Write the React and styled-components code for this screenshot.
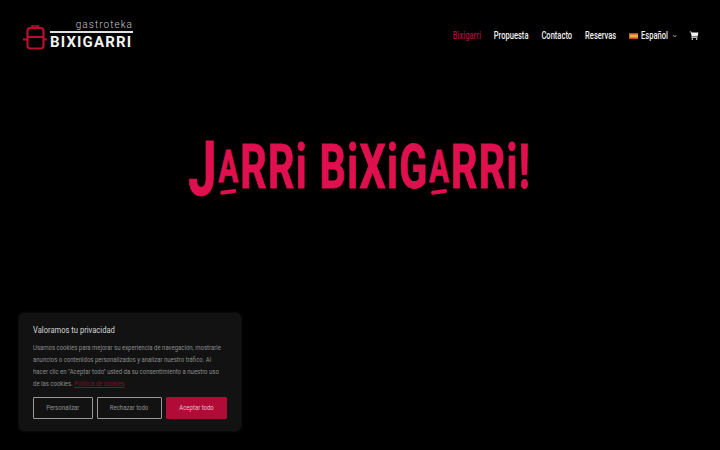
import React from "react";
import styled, { createGlobalStyle } from "styled-components";

const SANS = `"Roboto", "Liberation Sans", sans-serif`;
const Global = createGlobalStyle`
  html, body { margin: 0; padding: 0; background: #000; }
  body { width: 720px; height: 450px; overflow: hidden; font-family: ${SANS}; }
  * { box-sizing: border-box; }
`;
const Page = styled.div`
  position: relative; width: 720px; height: 450px; background: #000; overflow: hidden;
`;
const Header = styled.header`
  display: flex; align-items: center; justify-content: space-between;
  height: 70px; padding: 0 21px 0 23px;
`;
const Logo = styled.div`display: flex; align-items: flex-end; gap: 3px;`;
const LogoText = styled.div`display: flex; flex-direction: column; align-items: flex-end; width: 83px;`;
const Tagline = styled.span`
  font: 300 10px/10px ${SANS}; letter-spacing: 1.05px; color: #c8c8c8; margin-bottom: 1px;
`;
const Rule = styled.div`width: 83px; height: 2px; background: #e2e2e2;`;
const Brand = styled.span`
  font: 700 15px/16px ${SANS}; letter-spacing: 1.15px; color: #f2f2f2; margin-top: 1px; white-space: nowrap;
  width: 83px;
`;
const Nav = styled.nav`
  display: flex; align-items: center; gap: 18px; margin-top: 1px;
  transform: scaleX(.72); transform-origin: right center;
`;
const NavLink = styled.a`
  font: 500 10.500px/14px ${SANS}; color: ${p => (p.$active ? "#b00c37" : "#f1f1f1")};
  white-space: nowrap; display: flex; align-items: center; gap: 4px;
`;
const Chevron = styled.svg`width: 6.500px; height: 4px; margin-left: 2px;`;
const Cart = styled.svg`width: 12.500px; height: 9px;`;
const Flag = styled.svg`width: 12.500px; height: 6px;`;
const Hero = styled.main`display: flex; justify-content: center; padding-top: 57px;`;
const Title = styled.h1`
  margin: 0; font: 700 62px/80px ${SANS}; color: #e0104f;
  letter-spacing: 2px; white-space: nowrap;
  -webkit-text-stroke: 1px #e0104f;
  transform: scaleX(.665);
`;
const Jay = styled.span`
  font-size: 76px; line-height: 1; vertical-align: -7px;
`;
const UnderA = styled.span`
  position: relative; display: inline-block; font-size: 44px; margin: 0 1px; vertical-align: 6px; line-height: 1;
  &::after { content: ""; position: absolute; left: 3px; right: 5px; bottom: -5px; height: 4px; border-radius: 2px; background: #e0104f; transform: rotate(-5deg); }
`;
const Cookie = styled.section`
  position: absolute; left: 20px; top: 314px; width: 220px; height: 116px;
  background: #121212; border-radius: 4px; box-shadow: 0 0 3px 1px rgba(60,60,60,.5);
  padding: 10px 13px 0;
`;
const CookieTitle = styled.h2`
  margin: 0 0 6px; font: 400 9.500px/12px ${SANS}; color: #d6d6d6; white-space: nowrap;
  transform: scaleX(.8); transform-origin: left center;
`;
const CookieText = styled.p`
  margin: 0; width: 240px; font: 400 7.500px/12px ${SANS}; color: #8c8c8c; white-space: pre-line;
  transform: scaleX(.8); transform-origin: left center;
`;
const Policy = styled.a`color: #80102e; text-decoration: underline;`;
const Buttons = styled.div`display: flex; gap: 4px; margin-top: 7px;`;
const Btn = styled.button`
  height: 22px; width: ${p => p.$w}px; padding: 0; border-radius: 1px;
  border: 1px solid ${p => (p.$primary ? "#b00c37" : "#9a9a9a")};
  background: ${p => (p.$primary ? "#b00c37" : "transparent")};
  color: ${p => (p.$primary ? "#e6bcc8" : "#8f8f8f")};
  font: 400 7.500px/1 ${SANS};
`;
const BtnLabel = styled.span`display: inline-block; white-space: nowrap; transform: scaleX(.8);`;

export default function App() {
  return (
    <Page>
      <Global />
      <Header>
        <Logo>
          <svg width="24" height="25" viewBox="0 0 24 25" fill="none" stroke="#b5112f" strokeWidth="2.2">
            <path d="M9 3V1h6.500v2" strokeWidth="1.600" />
            <path d="M4.500 12V6c0-1.700 1-3 2.800-3h10.400c1.800 0 2.800 1.300 2.800 3v6" />
            <path d="M4.500 12h15.500" />
            <path d="M4.500 12v8.500c0 1.900 1 3 2.800 3h10.400c1.800 0 2.800-1.100 2.800-3V12" />
            <path d="M0 14.500h4M20 14.500h4" strokeWidth="1.800" />
          </svg>
          <LogoText>
            <Tagline>gastroteka</Tagline>
            <Rule />
            <Brand>BIXIGARRI</Brand>
          </LogoText>
        </Logo>
        <Nav>
          <NavLink $active>Bixigarri</NavLink>
          <NavLink>Propuesta</NavLink>
          <NavLink>Contacto</NavLink>
          <NavLink>Reservas</NavLink>
          <NavLink>
            <Flag viewBox="0 0 9 6" preserveAspectRatio="none">
              <rect width="9" height="6" fill="#e9b23a" />
              <rect width="9" height="1.500" fill="#c8402f" />
              <rect y="4.500" width="9" height="1.500" fill="#c8402f" />
            </Flag>
            Español
            <Chevron viewBox="0 0 5 4" preserveAspectRatio="none" fill="none" stroke="#cfcfcf" strokeWidth="0.8">
              <path d="M.5 1l2 2 2-2" />
            </Chevron>
          </NavLink>
          <Cart viewBox="0 0 10 10" preserveAspectRatio="none" fill="#f1f1f1">
            <path d="M0 .5h1.800l.4 1.200h7.600L8.800 6H3l-.2.800h6v.8H1.800l.5-1.800L1.200 1.300H0z" />
            <circle cx="3" cy="9" r=".9" />
            <circle cx="7.800" cy="9" r=".9" />
          </Cart>
        </Nav>
      </Header>
      <Hero>
        <Title>
          <Jay>J</Jay><UnderA>A</UnderA>RRi BiXiG<UnderA>A</UnderA>RRi!
        </Title>
      </Hero>
      <Cookie>
        <CookieTitle>Valoramos tu privacidad</CookieTitle>
        <CookieText>
          {"Usamos cookies para mejorar su experiencia de navegación, mostrarle\nanuncios o contenidos personalizados y analizar nuestro tráfico. Al\nhacer clic en \"Aceptar todo\" usted da su consentimiento a nuestro uso\nde las cookies. "}
          <Policy>Política de cookies</Policy>
        </CookieText>
        <Buttons>
          <Btn $w={60}><BtnLabel>Personalizar</BtnLabel></Btn>
          <Btn $w={65}><BtnLabel>Rechazar todo</BtnLabel></Btn>
          <Btn $w={61} $primary><BtnLabel>Aceptar todo</BtnLabel></Btn>
        </Buttons>
      </Cookie>
    </Page>
  );
}
